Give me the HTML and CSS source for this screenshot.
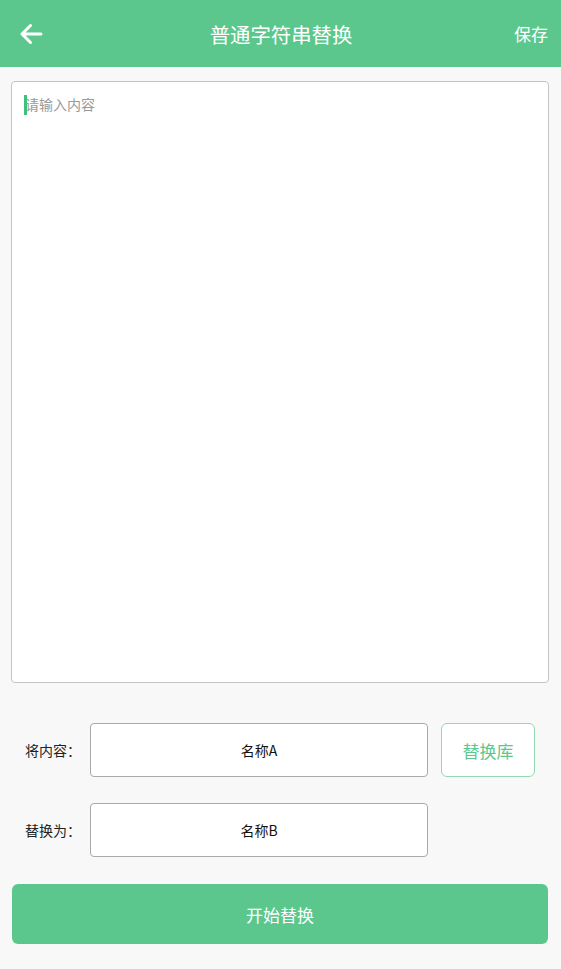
FILE: index.html
```html
<!DOCTYPE html>
<html lang="zh-CN">
<head>
<meta charset="utf-8">
<title>普通字符串替换</title>
<link rel="stylesheet" href="styles.css">
</head>
<body>
<div class="app">
  <header class="bar">
    <span class="back">
      <svg width="24" height="22" viewBox="0 0 24 22"><path d="M22 11H3M11.5 2.5L3 11l8.5 8.5" fill="none" stroke="#fff" stroke-width="3" stroke-linecap="round" stroke-linejoin="round"/></svg>
    </span>
    <h1 class="title">普通字符串替换</h1>
    <span class="save">保存</span>
  </header>
  <div class="editor">
    <span class="caret"></span><span class="placeholder">请输入内容</span>
  </div>
  <div class="form">
    <div class="row">
      <span class="label">将内容：</span>
      <div class="field">名称A</div>
      <div class="lib">替换库</div>
    </div>
    <div class="row">
      <span class="label">替换为：</span>
      <div class="field">名称B</div>
    </div>
  </div>
  <div class="start">开始替换</div>
</div>
</body>
</html>
```
FILE: styles.css
```css
* { box-sizing: border-box; }
html, body { margin: 0; padding: 0; }
body {
  background: #f8f8f8;
  font-family: "Noto Sans CJK SC", "Noto Sans", sans-serif;
  color: #222;
}
.app { width: 561px; height: 969px; display: flex; flex-direction: column; }
.bar {
  height: 67px;
  background: #5bc78c;
  display: flex;
  align-items: center;
  padding: 0 13px 0 19px;
  position: relative;
}
.back { display: flex; width: 24px; height: 22px; margin-top: 1px; }
.title {
  flex: 1;
  margin: 0;
  text-align: center;
  color: #fff;
  font-size: 20.4px;
  font-weight: normal;
  padding-left: 5px;
}
.save { color: #fff; font-size: 17px; }
.editor {
  margin: 14px 12px 0 11px;
  height: 602px;
  background: #fff;
  border: 1px solid #c4c4c4;
  border-radius: 4px;
  padding: 12px 0 0 12px;
  display: flex;
  align-items: flex-start;
}
.caret { width: 3px; height: 20px; background: #42c07a; margin-top: 1px; }
.placeholder { color: #9a9a9a; font-size: 14px; line-height: 20px; margin-left: -2px; }
.form { display: flex; flex-direction: column; gap: 26px; margin-top: 40px; }
.row { display: flex; align-items: center; padding-left: 25px; }
.label { width: 65px; font-size: 14px; color: #222; }
.field {
  width: 338px;
  height: 54px;
  background: #fff;
  border: 1px solid #a9a9a9;
  border-radius: 4px;
  display: flex;
  align-items: center;
  justify-content: center;
  font-size: 14px;
  color: #111;
}
.lib {
  margin-left: 13px;
  width: 94px;
  height: 54px;
  background: #fff;
  border: 1px solid #8fdab0;
  border-radius: 6px;
  display: flex;
  align-items: center;
  justify-content: center;
  color: #5bc78c;
  font-size: 17px;
}
.start {
  margin: 27px 13px 0 12px;
  height: 60px;
  background: #5bc78c;
  border-radius: 6px;
  color: #fff;
  font-size: 17px;
  display: flex;
  align-items: center;
  justify-content: center;
}
```
